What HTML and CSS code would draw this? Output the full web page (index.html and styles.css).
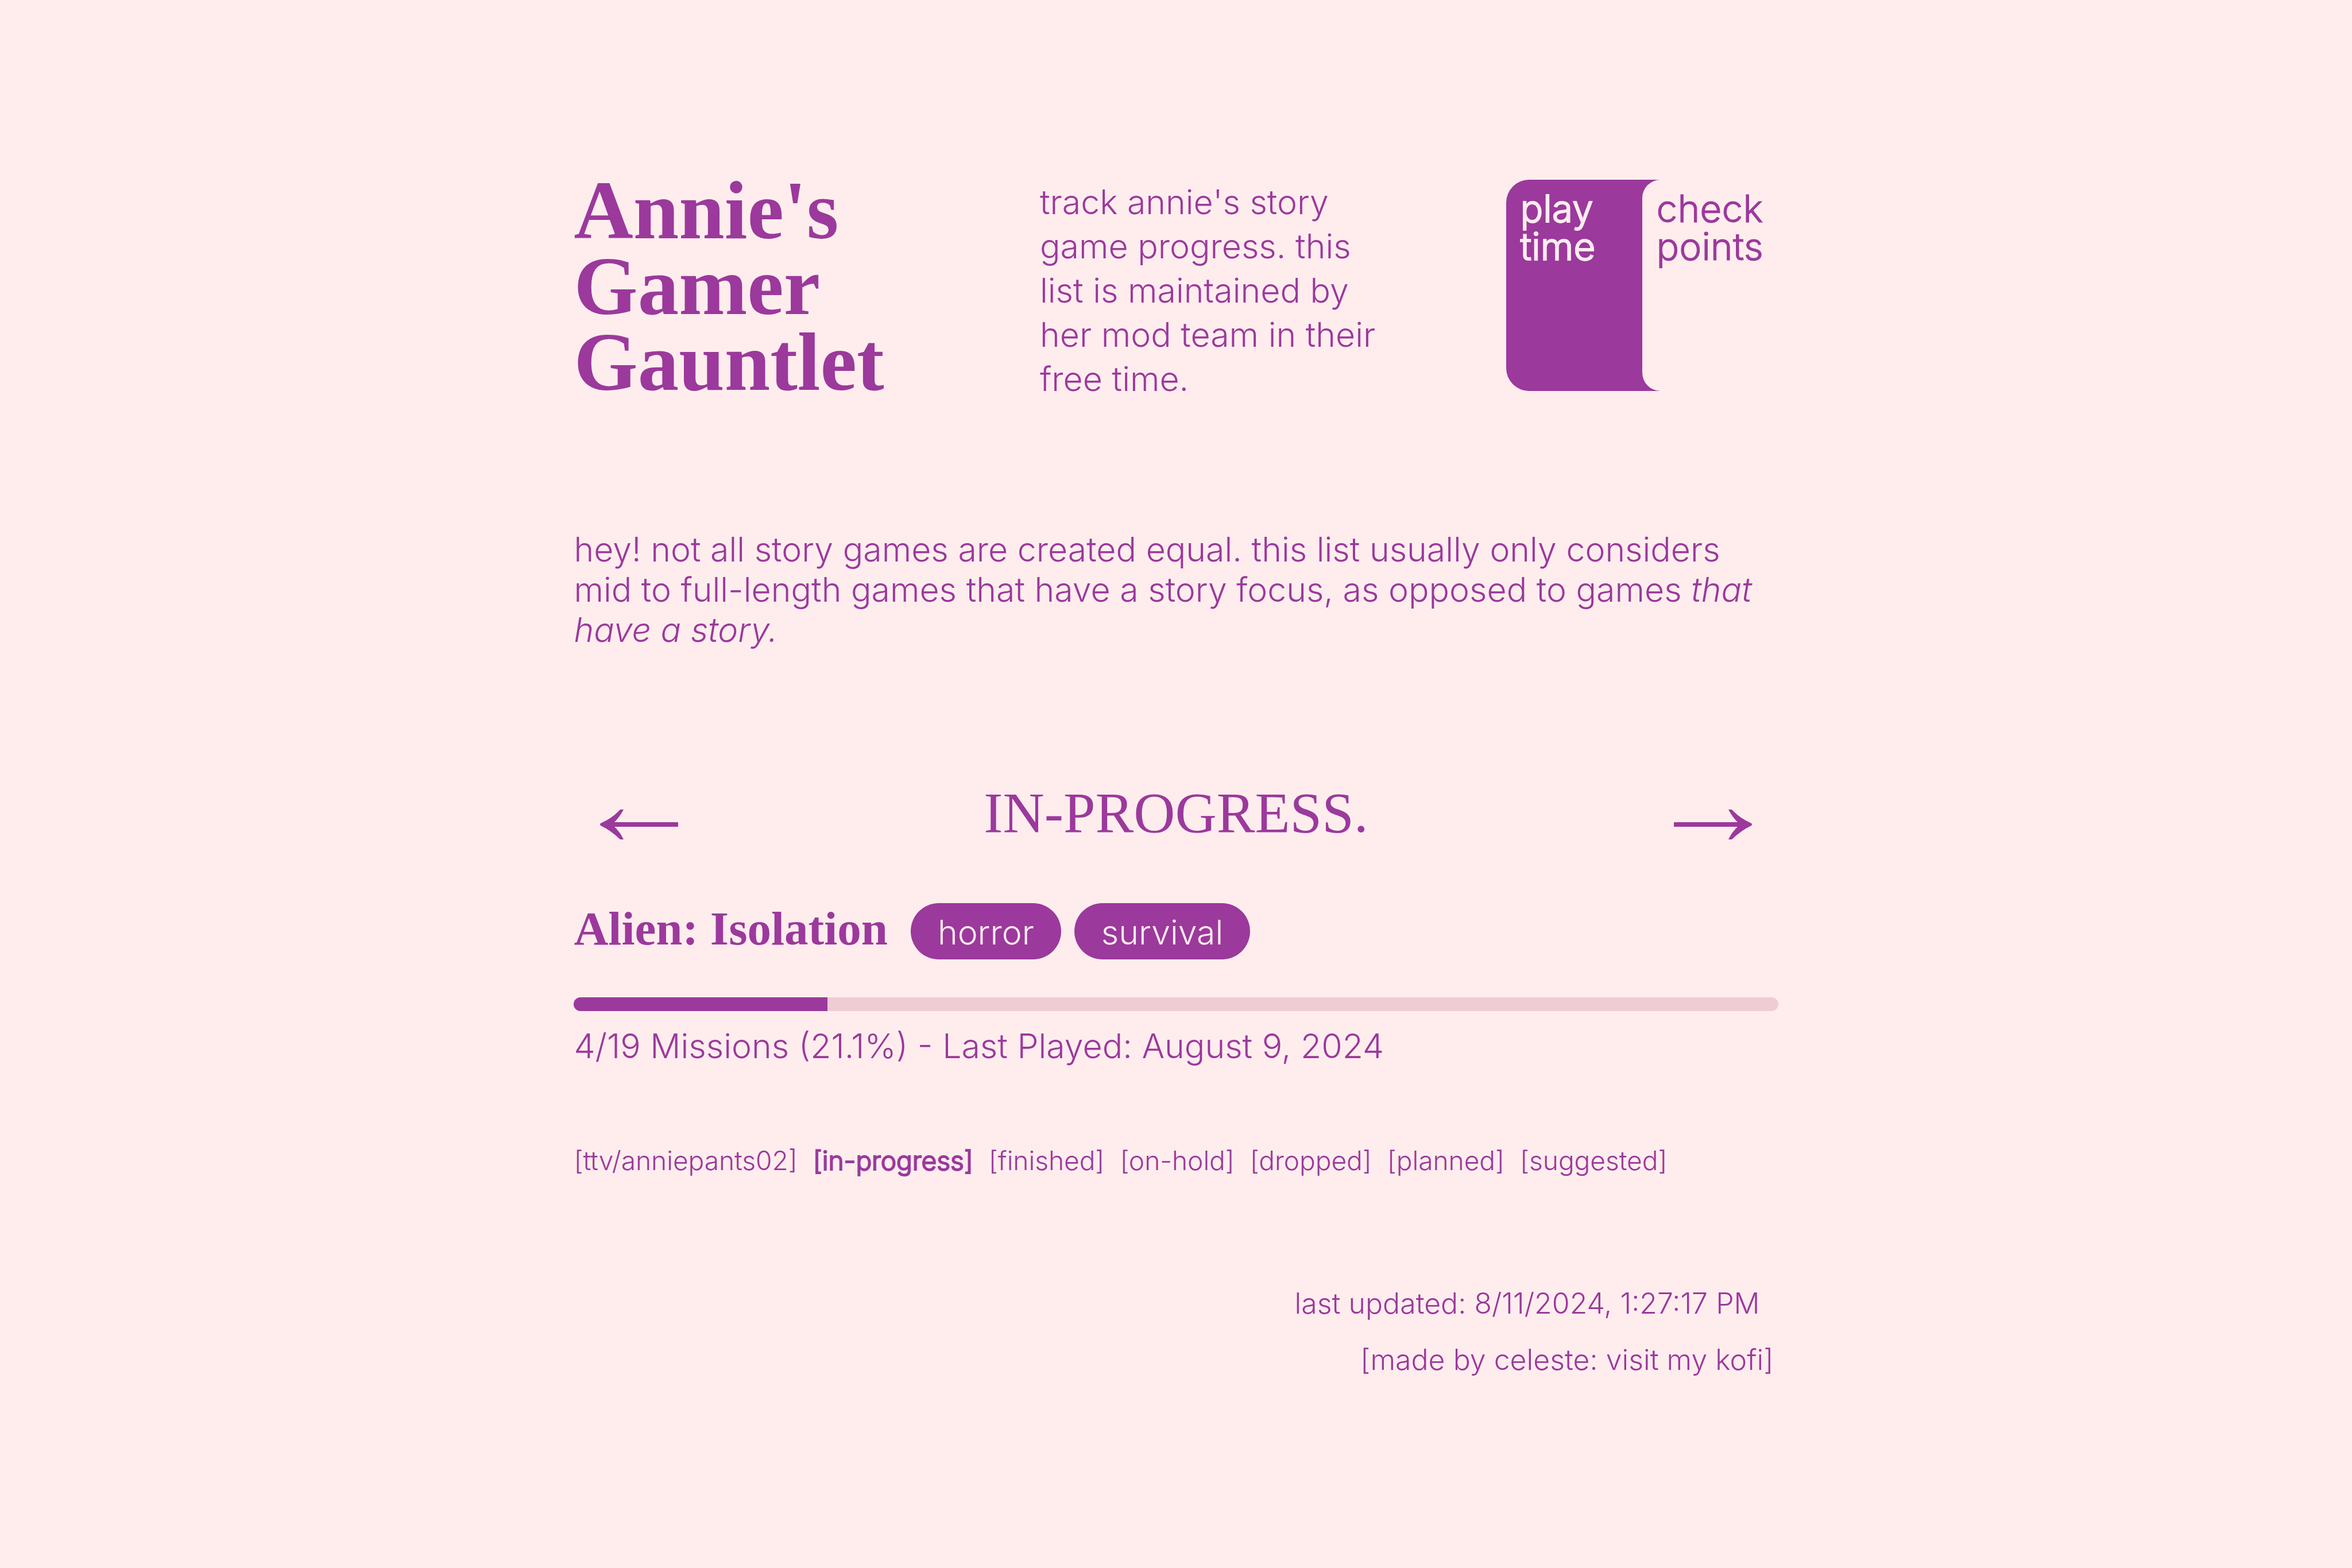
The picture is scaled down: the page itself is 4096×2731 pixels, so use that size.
FILE: index.html
```html
<!DOCTYPE html>
<html lang="en">
<head>
<meta charset="utf-8">
<meta name="viewport" content="width=device-width, initial-scale=1">
<title>Annie's Gamer Gauntlet</title>
<link rel="stylesheet" href="styles.css">
</head>
<body>
<div class="page">
  <header class="header">
    <h1 class="site-title">Annie's Gamer Gauntlet</h1>
    <p class="intro">track annie's story game progress. this list is maintained by her mod team in their free time.</p>
    <div class="toggle">
      <button class="toggle-option toggle-active" type="button" aria-pressed="true">play<br>time</button>
      <button class="toggle-option" type="button" aria-pressed="false">check<br>points</button>
    </div>
  </header>

  <main>
    <p class="notice">hey! not all story games are created equal. this list usually only considers mid to full-length games that have a story focus, as opposed to games <em>that have a story.</em></p>

    <div class="status">
      <button class="arrow" type="button" aria-label="Previous list">
        <svg class="arrow-icon" viewBox="0 0 136 52" aria-hidden="true"><path d="M0 26v-1Q1 23.500 3 23Q20 15 30 5L35 0H41Q34 13 25 22H135Q136 22 136 23V29Q136 30 135 30H25Q34 38 41 52H35Q18 36 3 29Q0 28 0 26Z"/></svg>
      </button>
      <h2 class="status-name">IN-PROGRESS.</h2>
      <button class="arrow" type="button" aria-label="Next list">
        <svg class="arrow-icon arrow-next" viewBox="0 0 136 52" aria-hidden="true"><path d="M0 26v-1Q1 23.500 3 23Q20 15 30 5L35 0H41Q34 13 25 22H135Q136 22 136 23V29Q136 30 135 30H25Q34 38 41 52H35Q18 36 3 29Q0 28 0 26Z"/></svg>
      </button>
    </div>

    <article class="game">
      <div class="game-head">
        <h3 class="game-title">Alien: Isolation</h3>
        <ul class="tags">
          <li class="tag">horror</li>
          <li class="tag">survival</li>
        </ul>
      </div>
      <div class="bar" role="progressbar" aria-label="Missions completed" aria-valuemin="0" aria-valuemax="19" aria-valuenow="4">
        <div class="bar-fill" style="width: 21.05%"></div>
      </div>
      <p class="game-info">4/19 Missions (21.1%) - Last Played: August 9, 2024</p>
    </article>

    <nav class="lists" aria-label="Lists">
      <a href="#ttv">[ttv/anniepants02]</a>
      <a class="current" href="#in-progress" aria-current="page">[in-progress]</a>
      <a href="#finished">[finished]</a>
      <a href="#on-hold">[on-hold]</a>
      <a href="#dropped">[dropped]</a>
      <a href="#planned">[planned]</a>
      <a href="#suggested">[suggested]</a>
    </nav>
  </main>

  <footer class="footer">
    <p class="updated">last updated: 8/11/2024, 1:27:17 PM</p>
    <a class="credit" href="#kofi">[made by celeste: visit my kofi]</a>
  </footer>
</div>
</body>
</html>
```
FILE: styles.css
```css
:root {
  --ink: #9b399c;
  --paper: #ffedee;
  --track: #efccd3;
  --serif: "Liberation Serif", serif;
}

* {
  box-sizing: border-box;
  margin: 0;
  padding: 0;
}

body {
  background: var(--paper);
  color: var(--ink);
  font-family: Inter, sans-serif;
  font-size: 59px;
  font-weight: 300;
  line-height: 70px;
}

button {
  border: 0;
  background: none;
  color: inherit;
  font: inherit;
  cursor: pointer;
}

a {
  color: inherit;
  text-decoration: none;
}

.page {
  width: 51.2%;
  margin: 0 auto;
  padding: 301px 0;
}

.header {
  display: grid;
  grid-template-columns: 1fr 1fr 474px;
  column-gap: 216px;
  align-items: start;
}

.site-title {
  font-family: var(--serif);
  font-size: 143px;
  font-weight: 700;
  line-height: 132px;
}

.intro {
  margin-top: 12px;
  line-height: 77px;
}

.toggle {
  display: grid;
  grid-template-columns: 1fr 1fr;
  height: 368px;
  margin-top: 12px;
  border-radius: 40px;
  background: linear-gradient(to right, var(--ink) 60%, var(--paper) 60%);
}

.toggle-option {
  display: flex;
  align-items: flex-start;
  padding: 17px 25px;
  border-radius: 32px;
  background: var(--paper);
  font-size: 66px;
  line-height: 66px;
  text-align: left;
  -webkit-text-stroke: 1px currentColor;
}

.toggle-active {
  background: none;
  color: var(--paper);
  -webkit-text-stroke-width: 2px;
}

.notice {
  margin-top: 224px;
}

.status {
  display: flex;
  justify-content: space-between;
  align-items: flex-end;
  margin-top: 224px;
}

.status-name {
  font-family: var(--serif);
  font-size: 100px;
  font-weight: 400;
  line-height: 120px;
}

.arrow {
  display: flex;
  padding: 14px 46px;
}

.arrow-icon {
  width: 136px;
  height: 52px;
  fill: currentColor;
}

.arrow-next {
  transform: scaleX(-1);
}

.game {
  margin-top: 97px;
}

.game-head {
  display: flex;
  align-items: baseline;
  gap: 40px;
}

.game-title {
  font-family: var(--serif);
  font-size: 83px;
  font-weight: 700;
}

.tags {
  display: flex;
  gap: 23px;
  list-style: none;
}

.tag {
  padding: 16px 47px 12px;
  border-radius: 49px;
  background: var(--ink);
  color: var(--paper);
}

.bar {
  height: 24px;
  margin: 66px 0 26px;
  overflow: hidden;
  border-radius: 12px;
  background: var(--track);
}

.bar-fill {
  height: 100%;
  background: var(--ink);
}

.lists {
  display: flex;
  flex-wrap: wrap;
  column-gap: 27px;
  margin-top: 134px;
  font-size: 46px;
  line-height: 60px;
}

.current {
  -webkit-text-stroke: 2px currentColor;
}

.footer {
  display: flex;
  flex-direction: column;
  align-items: flex-end;
  gap: 38px;
  margin-top: 189px;
  font-size: 50px;
  line-height: 60px;
}

.updated {
  padding-right: 32px;
}

.credit {
  padding-right: 8px;
}
```
